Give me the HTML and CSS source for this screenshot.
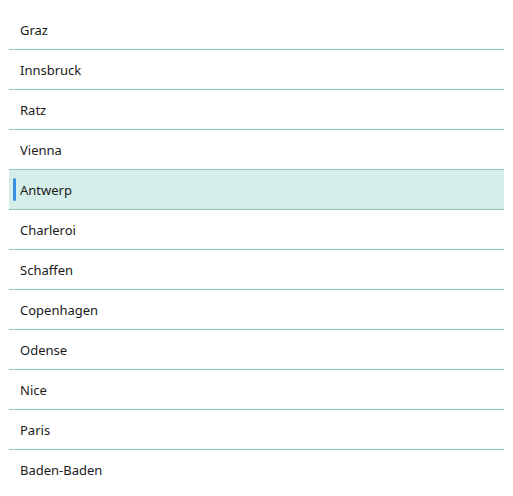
FILE: index.html
```html
<!DOCTYPE html>
<html>
<head>
<meta charset="utf-8">
<link rel="stylesheet" href="styles.css">
</head>
<body>
<ul class="list">
  <li class="item">Graz</li>
  <li class="item">Innsbruck</li>
  <li class="item">Ratz</li>
  <li class="item">Vienna</li>
  <li class="item selected">Antwerp</li>
  <li class="item">Charleroi</li>
  <li class="item">Schaffen</li>
  <li class="item">Copenhagen</li>
  <li class="item">Odense</li>
  <li class="item">Nice</li>
  <li class="item">Paris</li>
  <li class="item">Baden-Baden</li>
</ul>
</body>
</html>
```
FILE: styles.css
```css
html, body {
  margin: 0;
  padding: 0;
  background: #ffffff;
}
body {
  padding: 10px 9px 0 9px;
  font-family: "Noto Sans", sans-serif;
  font-size: 13px;
  color: #1a1a1a;
}
.list {
  list-style: none;
  margin: 0;
  padding: 0;
}
.item {
  position: relative;
  height: 39px;
  display: flex;
  align-items: center;
  padding-left: 11px;
  border-bottom: 1px solid #8ccabd;
}
.item:last-child {
  border-bottom: none;
}
.selected {
  background: #d5eeea;
}
.selected::before {
  content: "";
  position: absolute;
  left: 4px;
  top: 8px;
  width: 3px;
  height: 23px;
  border-radius: 2px;
  background: #3b8fe0;
}
```
